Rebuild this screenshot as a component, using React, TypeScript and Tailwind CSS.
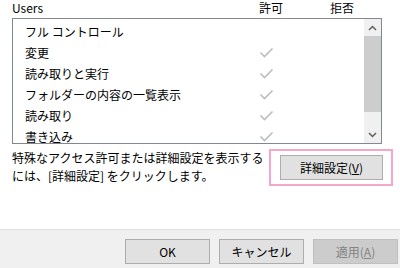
import React from 'react';

const rows = [
  { name: 'フル コントロール', allow: false },
  { name: '変更', allow: true },
  { name: '読み取りと実行', allow: true },
  { name: 'フォルダーの内容の一覧表示', allow: true },
  { name: '読み取り', allow: true },
  { name: '書き込み', allow: true },
];

function Check() {
  return (
    <svg width="15" height="11" viewBox="0 0 15 11" fill="none">
      <path d="M1.5 5.5 L5.5 9.5 L13.5 1.5" stroke="#bdbdbd" strokeWidth="1.6" />
    </svg>
  );
}

function Chevron({ up }: { up?: boolean }) {
  return (
    <svg width="9" height="6" viewBox="0 0 9 6" fill="none">
      <path d={up ? 'M1 5 L4.5 1.5 L8 5' : 'M1 1 L4.5 4.5 L8 1'} stroke="#606060" strokeWidth="1.5" />
    </svg>
  );
}

function Btn({ children, disabled, className = '' }: { children: React.ReactNode; disabled?: boolean; className?: string }) {
  return (
    <div
      className={
        'flex items-center justify-center border h-[25px] ' +
        (disabled ? 'bg-[#cccccc] border-[#bfbfbf] text-[#838383] ' : 'bg-[#e1e1e1] border-[#adadad] text-black ') +
        className
      }
    >
      {children}
    </div>
  );
}

export default function App() {
  return (
    <div
      className="w-[400px] h-[268px] bg-white flex flex-col overflow-hidden text-[12px] text-black"
      style={{ fontFamily: '"Noto Sans CJK JP", "Noto Sans", sans-serif' }}
    >
      {/* column header */}
      <div className="flex h-[18px] pl-[12px] leading-[16px]">
        <div className="w-[247px]">Users</div>
        <div className="w-[71px]">許可</div>
        <div>拒否</div>
      </div>

      {/* permission list */}
      <div className="ml-[12px] w-[370px] h-[126px] border border-[#828790] flex">
        <div className="flex-1 overflow-hidden pt-[2px]">
          {rows.map((r) => (
            <div key={r.name} className="flex h-[21px] items-center">
              <div className="w-[226px] pl-[12px] whitespace-nowrap">{r.name}</div>
              <div className="w-[54px] flex justify-center">{r.allow && <Check />}</div>
            </div>
          ))}
        </div>
        <div className="w-[17px] bg-[#f0f0f0] flex flex-col">
          <div className="h-[17px] flex items-center justify-center">
            <Chevron up />
          </div>
          <div className="h-[76px] bg-[#cdcdcd]" />
          <div className="flex-1" />
          <div className="h-[17px] flex items-center justify-center">
            <Chevron />
          </div>
        </div>
      </div>

      {/* description + advanced button */}
      <div className="flex pl-[12px] mt-[5px]">
        <div className="w-[257px] leading-[18px] whitespace-nowrap">
          特殊なアクセス許可または詳細設定を表示する
          <br />
          には、[詳細設定] をクリックします。
        </div>
        <div className="w-[124px] h-[37px] border-2 border-[#f4a7c8] flex items-center pl-[9px]">
          <Btn className="w-[103px] h-[24px]">
            詳細設定(<span className="underline">V</span>)
          </Btn>
        </div>
      </div>

      {/* dialog buttons */}
      <div className="mt-auto h-[39px] bg-[#f0f0f0] border-t border-[#dfdfdf] flex justify-end items-start pt-[9px] pr-[2px] gap-[9px]">
        <Btn className="w-[85px]">OK</Btn>
        <Btn className="w-[85px]">キャンセル</Btn>
        <Btn className="w-[85px]" disabled>
          適用(<span className="underline">A</span>)
        </Btn>
      </div>
    </div>
  );
}
